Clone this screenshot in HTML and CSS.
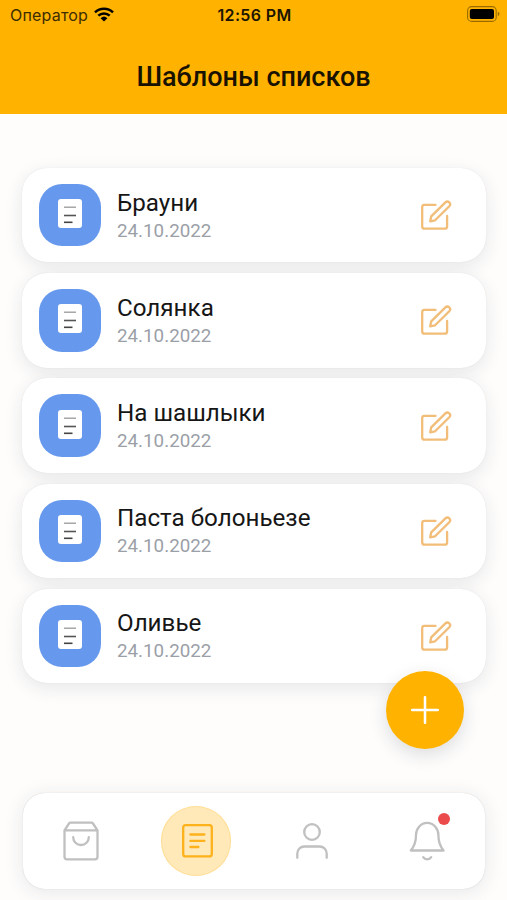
FILE: index.html
```html
<!DOCTYPE html>
<html lang="ru">
<head>
    <meta charset="UTF-8">
    <meta name="viewport" content="width=device-width, initial-scale=1.0">
    <title>Шаблоны списков</title>
    <link rel="stylesheet" href="styles.css">
</head>
<body>
    <!-- общие иконки -->
    <svg class="sprite">
        <symbol id="doc" viewBox="0 0 24 30">
            <rect width="24" height="29" rx="3" fill="#fff"/>
            <path d="M6 8.2h12" stroke="#999" stroke-width="1.3"/>
            <path d="M6 16.5h12" stroke="#555" stroke-width="1.6"/>
            <path d="M6 23.3h8.500" stroke="#444" stroke-width="1.6"/>
        </symbol>
        <symbol id="edit" viewBox="0 0 32 32">
            <path d="M15.500 5.900H4.500a2.300 2.300 0 0 0-2.300 2.300v19.200a2.300 2.300 0 0 0 2.300 2.300h20.300a2.300 2.300 0 0 0 2.300-2.300V17"/>
            <path d="M10.200 22.300l1-4.900L25.400 3.400a2.700 2.700 0 0 1 3.900 3.800L15.100 21.300z"/>
        </symbol>
    </svg>

    <header>
        <div class="status">
            <span class="carrier">Оператор
                <svg class="wifi" width="20" height="15" viewBox="0 0 20 15">
                    <path d="M1 5.300a13 13 0 0 1 18 0M4.300 8.700a8.300 8.300 0 0 1 11.400 0" fill="none" stroke="#000" stroke-width="2.500"/>
                    <path d="M6.600 11.200a5 5 0 0 1 6.800 0L10 14.600z"/>
                </svg>
            </span>
            <span class="time">12:56 PM</span>
            <svg class="battery" width="33" height="16" viewBox="0 0 33 16">
                <rect x=".6" y=".6" width="28.600" height="14.800" rx="4" fill="none" stroke="#000" stroke-opacity=".4" stroke-width="1.100"/>
                <rect x="2.800" y="3" width="24.200" height="10" rx="2"/>
                <path d="M30.800 5.800v4.400q1.700-.6 1.700-2.200t-1.700-2.200z" fill-opacity=".4"/>
            </svg>
        </div>
        <h1>Шаблоны списков</h1>
    </header>

    <main>
        <ul class="list">
            <li class="card">
                <span class="tile"><svg><use href="#doc"/></svg></span>
                <div class="info"><h2>Брауни</h2><time>24.10.2022</time></div>
                <svg class="edit"><use href="#edit"/></svg>
            </li>
            <li class="card">
                <span class="tile"><svg><use href="#doc"/></svg></span>
                <div class="info"><h2>Солянка</h2><time>24.10.2022</time></div>
                <svg class="edit"><use href="#edit"/></svg>
            </li>
            <li class="card">
                <span class="tile"><svg><use href="#doc"/></svg></span>
                <div class="info"><h2>На шашлыки</h2><time>24.10.2022</time></div>
                <svg class="edit"><use href="#edit"/></svg>
            </li>
            <li class="card">
                <span class="tile"><svg><use href="#doc"/></svg></span>
                <div class="info"><h2>Паста болоньезе</h2><time>24.10.2022</time></div>
                <svg class="edit"><use href="#edit"/></svg>
            </li>
            <li class="card">
                <span class="tile"><svg><use href="#doc"/></svg></span>
                <div class="info"><h2>Оливье</h2><time>24.10.2022</time></div>
                <svg class="edit"><use href="#edit"/></svg>
            </li>
        </ul>
    </main>

    <button class="add" aria-label="Добавить">
        <svg width="28" height="28" viewBox="0 0 28 28"><path d="M14 1.200v25.600M1.200 14h25.600"/></svg>
    </button>

    <nav>
        <a href="#" aria-label="Покупки">
            <svg width="40" height="40" viewBox="0 0 40 40">
                <path d="M3.500 9.300h33M3.500 9.300v26.500a2.500 2.500 0 0 0 2.500 2.500h28a2.500 2.500 0 0 0 2.500-2.500V9.300L32 2.500a2 2 0 0 0-1.500-.8h-21a2 2 0 0 0-1.500.8z"/>
                <path d="M12.200 16.200a7.800 7.800 0 0 0 15.600 0"/>
            </svg>
        </a>
        <a href="#" class="active" aria-label="Шаблоны">
            <svg width="40" height="40" viewBox="0 0 40 40">
                <rect x="7.200" y="4.200" width="28.600" height="31.200" rx="2.500"/>
                <path d="M14.400 13.500h14M14.400 19.800h14M14.400 26h8"/>
            </svg>
        </a>
        <a href="#" aria-label="Профиль">
            <svg width="40" height="40" viewBox="0 0 40 40">
                <circle cx="20" cy="11" r="7.800"/>
                <path d="M5.300 36.800v-4.300a7 7 0 0 1 7-7h15.400a7 7 0 0 1 7 7v4.300"/>
            </svg>
        </a>
        <a href="#" aria-label="Уведомления">
            <svg width="40" height="40" viewBox="0 0 40 40">
                <path d="M3.800 29.500h32.800c-3.500-4-5.200-8.300-5.200-15.200a11.200 12.400 0 0 0-22.400 0c0 6.900-1.700 11.200-5.200 15.200z"/>
                <path d="M16.200 36.200a4.800 4.800 0 0 0 8 0"/>
            </svg>
            <span class="dot"></span>
        </a>
    </nav>
</body>
</html>
```

FILE: styles.css
```css
* {
    box-sizing: border-box;
}
body {
    margin: 0;
    height: 900px;
    position: relative;
    overflow: hidden;
    display: flex;
    flex-direction: column;
    background-color: #fefdfc;
    font-family: Roboto, "Liberation Sans", sans-serif;
}
.sprite {
    position: absolute;
    width: 0;
    height: 0;
}
header {
    height: 114px;
    flex: none;
    background-color: #ffb300;
}
.status {
    display: grid;
    grid-template-columns: 1fr auto 1fr;
    align-items: center;
    height: 30px;
    padding: 0 7px 0 10px;
    font-family: Inter, sans-serif;
    font-size: 16px;
    color: #1d1500;
}
.carrier {
    display: flex;
    align-items: center;
    gap: 6px;
    letter-spacing: 0.2px;
    color: #3d2c00;
}
.wifi {
    margin-top: -2px;
}
.time {
    margin-left: -1px;
    font-weight: 600;
    letter-spacing: 0.35px;
}
.battery {
    justify-self: end;
    margin-top: -2px;
}
h1 {
    margin: 30px 0 0;
    text-align: center;
    font-size: 27px;
    line-height: 34px;
    font-weight: 500;
    color: #1a1200;
}
main {
    flex: 1;
    padding: 54px 21.500px 0 22px;
}
.list {
    display: flex;
    flex-direction: column;
    gap: 10.800px;
    margin: 0;
    padding: 0;
    list-style: none;
}
.card {
    display: flex;
    align-items: center;
    height: 94.400px;
    padding: 0 33.500px 0 16.500px;
    border-radius: 25px;
    background-color: #fff;
    box-shadow: 0 5px 18px rgba(40, 40, 60, 0.1), 0 0 1px rgba(80, 40, 40, 0.15);
}
.tile {
    display: flex;
    justify-content: center;
    align-items: center;
    width: 62.500px;
    height: 62.500px;
    border-radius: 23px;
    background-color: #6699ee;
}
.tile svg {
    width: 24px;
    height: 30px;
    margin-top: -2px;
}
.info {
    flex: 1;
    padding: 2px 0 0 16px;
}
h2 {
    margin: 0;
    font-size: 24.200px;
    line-height: 30px;
    font-weight: 400;
    color: #161616;
}
time {
    display: block;
    font-size: 18.800px;
    line-height: 27px;
    color: #9b9fa7;
}
.edit {
    width: 32px;
    height: 32px;
    fill: none;
    stroke: #f2bd78;
    stroke-width: 2.300;
    stroke-linejoin: round;
    stroke-linecap: round;
}
.add {
    position: absolute;
    right: 43.500px;
    bottom: 151px;
    display: flex;
    justify-content: center;
    align-items: center;
    width: 78px;
    height: 78px;
    padding: 0;
    border: none;
    border-radius: 50%;
    background-color: #ffb300;
    box-shadow: 0 6px 18px rgba(40, 40, 60, 0.15);
}
.add svg {
    stroke: #fff;
    stroke-width: 2.500;
    stroke-linecap: round;
}
nav {
    display: grid;
    grid-template-columns: repeat(4, 1fr);
    flex: none;
    height: 96px;
    margin: 0 22.300px 11.500px 23px;
    border-radius: 22px;
    background-color: #fff;
    box-shadow: 0 3px 20px rgba(40, 40, 60, 0.1), 0 0 1px rgba(60, 60, 60, 0.25);
}
nav a {
    position: relative;
    display: flex;
    justify-content: center;
    align-items: center;
    width: 70px;
    height: 70px;
    margin: auto;
    border-radius: 50%;
}
nav svg {
    fill: none;
    stroke: #c0c0c0;
    stroke-width: 2.300;
    stroke-linecap: round;
    stroke-linejoin: round;
}
nav .active {
    background-color: #ffe9b9;
    box-shadow: inset 0 0 0 1px #ffdf99;
}
.active svg {
    stroke: #fdb11b;
}
.dot {
    position: absolute;
    top: 7px;
    right: 12px;
    width: 12px;
    height: 12px;
    border-radius: 50%;
    background-color: #eb4b4b;
}
```
